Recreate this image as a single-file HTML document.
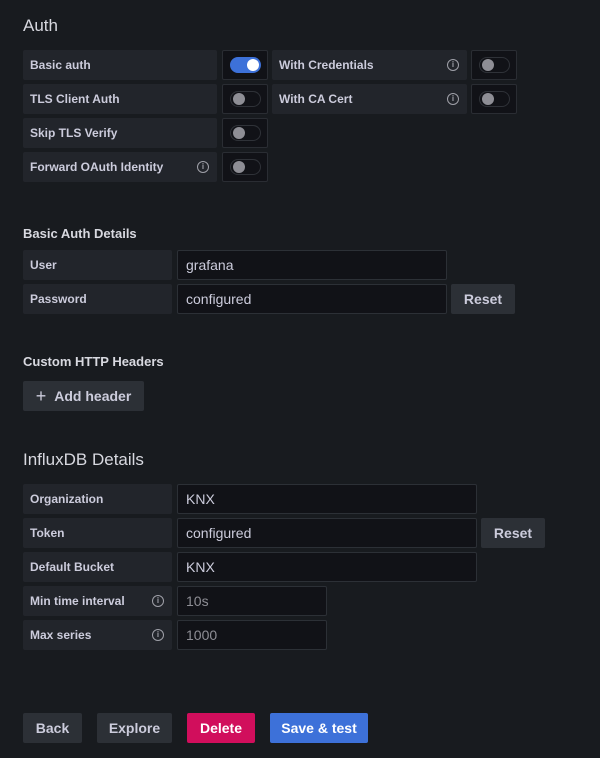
<!DOCTYPE html>
<html><head><meta charset="utf-8"><style>
*{box-sizing:border-box;margin:0;padding:0}
body{width:600px;height:758px;background:#181b1f;font-family:"Liberation Sans",sans-serif;color:#ccccdc;position:relative;overflow:hidden}
.a{position:absolute}
.h1{font-size:17px;color:#d8d9e0}
.h2{font-size:13px;font-weight:bold;color:#d8d9e0}
.lbl{background:#22252b;border-radius:2px;font-size:12px;font-weight:bold;color:#ccccdc;padding-left:7px;display:flex;align-items:center;height:30px}
.tb{background:#111217;border:1px solid #2a2d33;border-radius:2px;height:30px;width:46px}
.sw{position:absolute;left:7px;top:6px;width:31px;height:16px;border-radius:8px;border:1px solid #2f3238;background:#111217}
.sw::after{content:"";position:absolute;left:2px;top:1px;width:12px;height:12px;border-radius:50%;background:#8e8e95}
.sw.on{background:#3d71d9;border-color:#3d71d9}
.sw.on::after{left:16px;background:#fff}
.inp{background:#111217;border:1px solid #2c3036;border-radius:2px;height:30px;font-size:14px;color:#ccccdc;padding-left:8px;display:flex;align-items:center}
.ph{color:#8e8e95}
.btn{background:#2c3036;border-radius:2px;height:30px;font-size:14px;font-weight:bold;color:#ccccdc;display:flex;align-items:center;justify-content:center}
.i{position:absolute;right:8px;top:9px;width:12px;height:12px;border:1.3px solid #9fa0a8;border-radius:50%;font-size:8px;font-weight:bold;color:#9fa0a8;text-align:center;line-height:9px}
</style></head><body>
<div class="a h1" style="left:23px;top:16px">Auth</div>

<div class="a lbl" style="left:23px;top:50px;width:194px">Basic auth</div>
<div class="a tb" style="left:222px;top:50px"><div class="sw on"></div></div>
<div class="a lbl" style="left:272px;top:50px;width:195px">With Credentials<span class="i">i</span></div>
<div class="a tb" style="left:471px;top:50px"><div class="sw"></div></div>

<div class="a lbl" style="left:23px;top:84px;width:194px">TLS Client Auth</div>
<div class="a tb" style="left:222px;top:84px"><div class="sw"></div></div>
<div class="a lbl" style="left:272px;top:84px;width:195px">With CA Cert<span class="i">i</span></div>
<div class="a tb" style="left:471px;top:84px"><div class="sw"></div></div>

<div class="a lbl" style="left:23px;top:118px;width:194px">Skip TLS Verify</div>
<div class="a tb" style="left:222px;top:118px"><div class="sw"></div></div>

<div class="a lbl" style="left:23px;top:152px;width:194px">Forward OAuth Identity<span class="i">i</span></div>
<div class="a tb" style="left:222px;top:152px"><div class="sw"></div></div>

<div class="a h2" style="left:23px;top:226px">Basic Auth Details</div>
<div class="a lbl" style="left:23px;top:250px;width:149px">User</div>
<div class="a inp" style="left:177px;top:250px;width:270px">grafana</div>
<div class="a lbl" style="left:23px;top:284px;width:149px">Password</div>
<div class="a inp" style="left:177px;top:284px;width:270px">configured</div>
<div class="a btn" style="left:451px;top:284px;width:64px">Reset</div>

<div class="a h2" style="left:23px;top:354px">Custom HTTP Headers</div>
<div class="a btn" style="left:23px;top:381px;width:121px"><span style="font-size:18px;font-weight:normal;margin-right:8px">+</span>Add header</div>

<div class="a h1" style="left:23px;top:450px">InfluxDB Details</div>
<div class="a lbl" style="left:23px;top:484px;width:149px">Organization</div>
<div class="a inp" style="left:177px;top:484px;width:300px">KNX</div>
<div class="a lbl" style="left:23px;top:518px;width:149px">Token</div>
<div class="a inp" style="left:177px;top:518px;width:300px">configured</div>
<div class="a btn" style="left:481px;top:518px;width:64px">Reset</div>
<div class="a lbl" style="left:23px;top:552px;width:149px">Default Bucket</div>
<div class="a inp" style="left:177px;top:552px;width:300px">KNX</div>
<div class="a lbl" style="left:23px;top:586px;width:149px">Min time interval<span class="i">i</span></div>
<div class="a inp ph" style="left:177px;top:586px;width:150px">10s</div>
<div class="a lbl" style="left:23px;top:620px;width:149px">Max series<span class="i">i</span></div>
<div class="a inp ph" style="left:177px;top:620px;width:150px">1000</div>

<div class="a btn" style="left:23px;top:713px;width:59px">Back</div>
<div class="a btn" style="left:97px;top:713px;width:75px">Explore</div>
<div class="a btn" style="left:187px;top:713px;width:68px;background:#d10e5c;color:#fff">Delete</div>
<div class="a btn" style="left:270px;top:713px;width:98px;background:#3d71d9;color:#fff">Save &amp; test</div>
</body></html>
